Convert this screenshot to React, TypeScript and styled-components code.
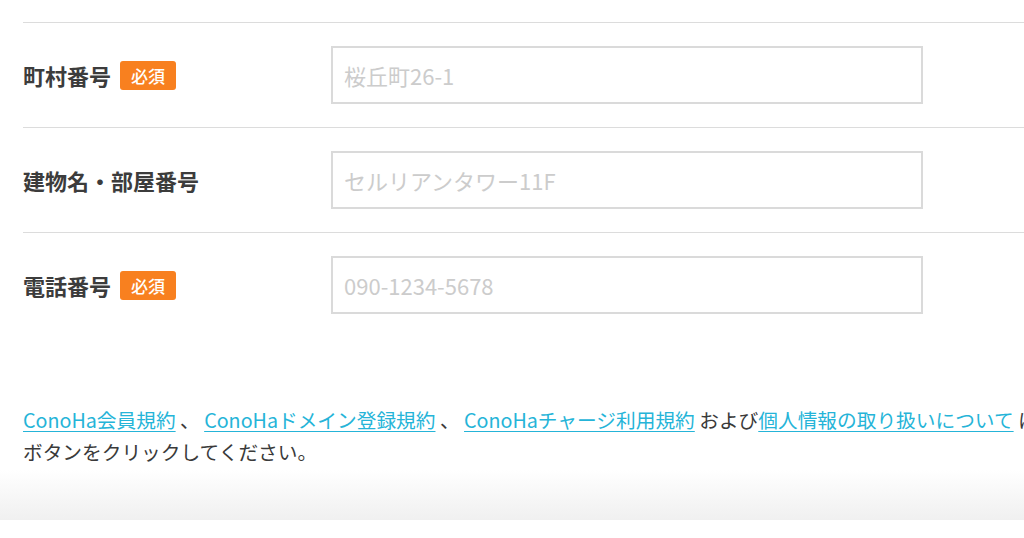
import React from "react";
import styled, { createGlobalStyle } from "styled-components";

const Global = createGlobalStyle`
  html, body {
    margin: 0;
    padding: 0;
    background: #fff;
    overflow: hidden;
  }
  body {
    font-family: "Noto Sans CJK JP", "Noto Sans", sans-serif;
    color: #333;
  }
`;

const Page = styled.div`
  width: 1024px;
  height: 538px;
  overflow: hidden;
  background: #fff;
`;

const Form = styled.div`
  width: 1300px;
  margin-left: 23px;
  padding-top: 22px;
`;

const Row = styled.div`
  display: grid;
  grid-template-columns: 308px 592px;
  align-items: center;
  padding: 23px 0;
  border-top: 1px solid #dcdcdc;
`;

const LabelWrap = styled.div`
  display: flex;
  align-items: center;
  gap: 9px;
`;

const Label = styled.span`
  font-size: 22px;
  font-weight: 700;
  color: #3c3c3c;
  line-height: 1;
`;

const Badge = styled.span`
  display: inline-flex;
  align-items: center;
  justify-content: center;
  height: 29px;
  padding: 0 11px;
  background: #f8801f;
  color: #fff;
  font-size: 17px;
  font-weight: 500;
  border-radius: 3px;
  line-height: 1;
`;

const Input = styled.input`
  box-sizing: border-box;
  width: 592px;
  height: 58px;
  border: 2px solid #dadada;
  padding: 0 11px;
  font-family: "Noto Sans CJK JP", "Noto Sans", sans-serif;
  font-size: 22px;
  color: #333;
  outline: none;
  background: #fff;
  &::placeholder {
    color: #cccccc;
  }
`;

const Notice = styled.p`
  width: 1300px;
  margin: 67px 0 0 23px;
  font-size: 19.7px;
  line-height: 32px;
  color: #3a3a3a;
  white-space: nowrap;
`;

const Link = styled.a`
  color: #25b4d8;
  text-decoration: underline;
  text-underline-offset: 3px;
  text-decoration-thickness: 1px;
`;

const Fade = styled.div`
  height: 50px;
  margin-top: 2px;
  background: linear-gradient(to bottom, #ffffff 0%, #f0f0f0 100%);
`;

type Field = { label: string; required: boolean; placeholder: string };

const fields: Field[] = [
  { label: "町村番号", required: true, placeholder: "桜丘町26-1" },
  { label: "建物名・部屋番号", required: false, placeholder: "セルリアンタワー11F" },
  { label: "電話番号", required: true, placeholder: "090-1234-5678" },
];

export default function App() {
  return (
    <Page>
      <Global />
      <Form>
        {fields.map((f) => (
          <Row key={f.label}>
            <LabelWrap>
              <Label>{f.label}</Label>
              {f.required && <Badge>必須</Badge>}
            </LabelWrap>
            <Input placeholder={f.placeholder} />
          </Row>
        ))}
      </Form>
      <Notice>
        <Link href="#">ConoHa会員規約</Link> 、 <Link href="#">ConoHaドメイン登録規約</Link> 、{" "}
        <Link href="#">ConoHaチャージ利用規約</Link> および<Link href="#">個人情報の取り扱いについて</Link>{" "}
        に同意の上、「次へ」
        <br />
        ボタンをクリックしてください。
      </Notice>
      <Fade />
    </Page>
  );
}
